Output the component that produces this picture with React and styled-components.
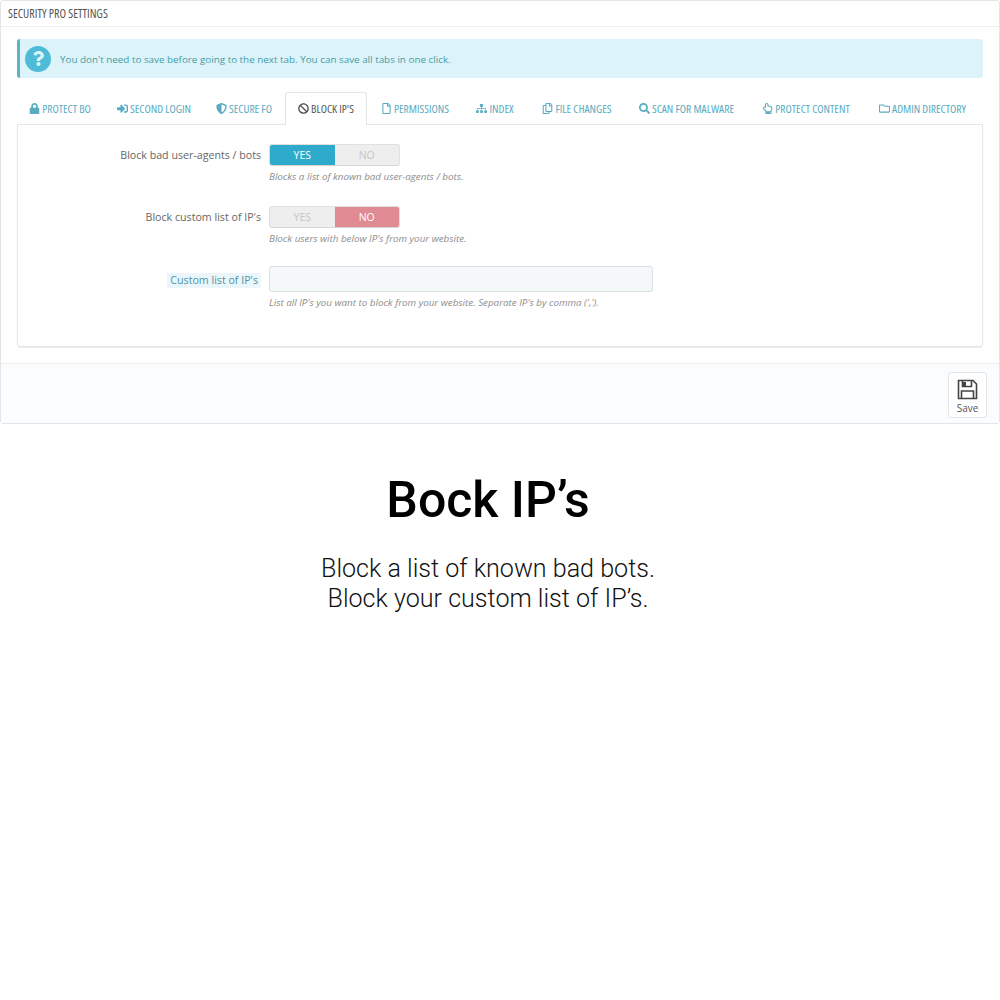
import React from 'react'
import styled, { createGlobalStyle } from 'styled-components'
import {
  FaBan, FaLock, FaQuestion, FaRegCopy, FaRegFile, FaRegFolder, FaRegHandPointUp,
  FaSearch, FaShieldAlt, FaSignInAlt, FaSitemap
} from 'react-icons/fa'

const GlobalStyle = createGlobalStyle`
  html, body {
    margin: 0;
    padding: 0;
    background: #fff;
    font-family: "Open Sans", sans-serif;
  }
  * { box-sizing: border-box; }
`

const Page = styled.div`
  width: 1000px;
  height: 1000px;
  overflow: hidden;
`

const Panel = styled.section`
  height: 424px;
  border: 1px solid #e3e5e6;
  border-radius: 3px;
  display: flex;
  flex-flow: column;
`

const PanelTitle = styled.h2`
  margin: 0;
  height: 26px;
  flex: none;
  padding-left: 7px;
  border-bottom: 1px solid #eeeeee;
  font-size: 12px;
  font-weight: 500;
  font-stretch: 75%;
  line-height: 25px;
  color: #555;
`

const PanelBody = styled.div`
  flex: 1;
  padding: 12px 16px 16px;
`

const Alert = styled.div`
  height: 39px;
  display: flex;
  align-items: center;
  gap: 9px;
  padding-left: 5px;
  background: #dcf4f9;
  border-left: 3px solid #5fb2c4;
  border-radius: 3px;
  font-size: 9.85px;
  color: #459ca8;
`

const AlertIcon = styled.span`
  width: 26px;
  height: 26px;
  border-radius: 50%;
  background: #4fbcd7;
  color: #dcf4f9;
  display: flex;
  align-items: center;
  justify-content: center;
  font-size: 15px;
`

const Tabs = styled.nav`
  display: flex;
  margin-top: 14px;
  height: 33px;
  position: relative;
  z-index: 1;
`

const Tab = styled.div`
  flex: none;
  width: ${p => p.$width}px;
  margin-right: ${p => p.$gap}px;
  padding-bottom: 2px;
  display: flex;
  align-items: center;
  justify-content: center;
  gap: 2px;
  white-space: nowrap;
  font-size: 11.5px;
  font-weight: 400;
  font-stretch: 75%;
  text-transform: uppercase;
  color: ${p => (p.$active ? '#555' : '#58abc0')};
  background: ${p => (p.$active ? '#fff' : 'transparent')};
  border: 1px solid ${p => (p.$active ? '#e3e5e6' : 'transparent')};
  border-bottom: none;
  border-radius: 3px 3px 0 0;
  svg { font-size: 11px; flex: none; }
`

const TabPane = styled.div`
  margin-top: -1px;
  height: 223px;
  padding-top: 19px;
  border: 1px solid #e3e5e6;
  border-radius: 0 0 3px 3px;
  box-shadow: 0 1px 1px #ececec;
`

const Field = styled.div`
  display: grid;
  grid-template-columns: 243px 1fr;
  column-gap: 8px;
  margin-bottom: ${p => p.$gap}px;
`

const Label = styled.label`
  justify-self: end;
  align-self: center;
  font-size: 10.65px;
  color: #666;
  ${p => p.$hint && `
    margin-top: 2px;
    background: #eaf6fa;
    color: #4f93a5;
    padding: 0 3px;
    line-height: 15px;
  `}
`

const Switch = styled.div`
  width: 131px;
  height: 22px;
  display: flex;
  border-radius: 3px;
  background: #eeeeee;
  border: 1px solid #e0e0e0;
  border-bottom-color: #d6d6d6;
  overflow: hidden;
`

const SwitchOption = styled.span`
  flex: 1;
  display: flex;
  align-items: center;
  justify-content: center;
  font-size: 10.5px;
  color: ${p => (p.$on ? '#fff' : '#c5c5c5')};
  background: ${p => p.$on || 'transparent'};
`

const TextField = styled.div`
  width: 384px;
  height: 26px;
  background: #f5f8f9;
  border: 1px solid #d9e0e2;
  border-radius: 3px;
`

const Help = styled.p`
  grid-column: 2;
  margin: 4px 0 0;
  font-size: 9.8px;
  line-height: 14px;
  font-style: italic;
  color: #8d8d8d;
`

const PanelFooter = styled.footer`
  height: 60px;
  flex: none;
  display: flex;
  justify-content: flex-end;
  padding: 8px 12px 0 0;
  background: #fbfcfd;
  border-top: 1px solid #eeeeee;
`

const SaveButton = styled.button`
  width: 39px;
  height: 46px;
  padding: 6px 0 0;
  display: flex;
  flex-flow: column;
  align-items: center;
  gap: 1px;
  background: #fff;
  border: 1px solid #e3e5e6;
  border-radius: 3px;
  font-family: "Open Sans", sans-serif;
  font-size: 10px;
  line-height: 14px;
  color: #555;
`

const Promo = styled.div`
  padding: 47px 24px 0 0;
  text-align: center;
  font-family: Roboto, sans-serif;
  color: #000;
`

const PromoTitle = styled.h1`
  margin: 0 0 25px;
  font-size: 50px;
  font-weight: 500;
  line-height: 58px;
`

const PromoText = styled.p`
  margin: 0;
  font-size: 25.1px;
  font-weight: 300;
  line-height: 30px;
  color: #111;
`

// floppy disk as in the reference, the stock ones have a different shutter
function SaveIcon() {
  return (
    <svg width="21" height="21" viewBox="0 0 21 21" fill="none" stroke="#444" strokeWidth="1.6">
      <path d="M1.5 1.5h14.5l3.5 3.5v14.5h-18z" />
      <path d="M5.5 1.5v6h9v-6" />
      <rect x="5" y="3" width="4" height="4" fill="#444" stroke="none" />
      <path d="M4.5 19.5v-7.5h12v7.5" />
    </svg>
  )
}

const tabs = [
  { label: 'Protect BO', icon: <FaLock />, width: 86, gap: 2 },
  { label: 'Second login', icon: <FaSignInAlt />, width: 98, gap: 2 },
  { label: 'Secure FO', icon: <FaShieldAlt />, width: 78, gap: 2 },
  { label: "Block IP's", icon: <FaBan />, width: 82, gap: 2, active: true },
  { label: 'Permissions', icon: <FaRegFile />, width: 92, gap: 2 },
  { label: 'Index', icon: <FaSitemap />, width: 64, gap: 2 },
  { label: 'File changes', icon: <FaRegCopy />, width: 96, gap: 2 },
  { label: 'Scan for malware', icon: <FaSearch />, width: 119, gap: 2 },
  { label: 'Protect content', icon: <FaRegHandPointUp />, width: 116, gap: 2 },
  { label: 'Admin directory', icon: <FaRegFolder />, width: 113, gap: 0 }
]

function App() {
  return (
    <Page>
      <GlobalStyle />
      <Panel>
        <PanelTitle>SECURITY PRO SETTINGS</PanelTitle>
        <PanelBody>
          <Alert>
            <AlertIcon><FaQuestion /></AlertIcon>
            You don't need to save before going to the next tab. You can save all tabs in one click.
          </Alert>
          <Tabs>
            {tabs.map(t => (
              <Tab key={t.label} $width={t.width} $gap={t.gap} $active={t.active}>
                {t.icon}
                {t.label}
              </Tab>
            ))}
          </Tabs>
          <TabPane>
            <Field $gap={22}>
              <Label>Block bad user-agents / bots</Label>
              <Switch>
                <SwitchOption $on="#2eaacb">YES</SwitchOption>
                <SwitchOption>NO</SwitchOption>
              </Switch>
              <Help>Blocks a list of known bad user-agents / bots.</Help>
            </Field>
            <Field $gap={20}>
              <Label>Block custom list of IP's</Label>
              <Switch>
                <SwitchOption>YES</SwitchOption>
                <SwitchOption $on="#e08a93">NO</SwitchOption>
              </Switch>
              <Help>Block users with below IP's from your website.</Help>
            </Field>
            <Field>
              <Label $hint>Custom list of IP's</Label>
              <TextField />
              <Help>List all IP's you want to block from your website. Separate IP's by comma (',').</Help>
            </Field>
          </TabPane>
        </PanelBody>
        <PanelFooter>
          <SaveButton>
            <SaveIcon />
            Save
          </SaveButton>
        </PanelFooter>
      </Panel>
      <Promo>
        <PromoTitle>Bock IP’s</PromoTitle>
        <PromoText>Block a list of known bad bots.<br />Block your custom list of IP’s.</PromoText>
      </Promo>
    </Page>
  )
}

export default App
